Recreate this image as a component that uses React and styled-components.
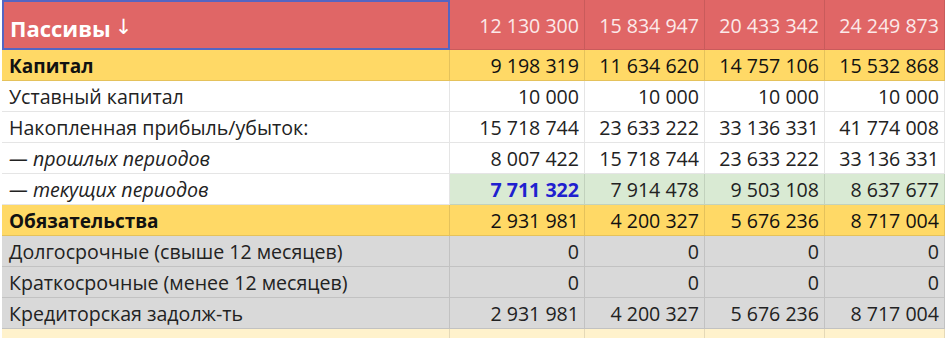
import React from "react";
import styled, { createGlobalStyle, css } from "styled-components";

const Global = createGlobalStyle`
  html, body { margin: 0; padding: 0; background: #ffffff; }
  body { font-family: "Open Sans", "Noto Sans", sans-serif; }
`;

const Sheet = styled.div`
  display: grid;
  grid-template-columns: 448px 135px 120px 120px 120px;
  width: 945px;
  padding-left: 2px;
  box-sizing: border-box;
  background: #ffffff;
`;

const tones = {
  header: { bg: "#e06666", color: "#fce9e9" },
  section: { bg: "#ffd966", color: "#111111" },
  plain: { bg: "#ffffff", color: "#222222" },
  green: { bg: "#d9ead3", color: "#222222" },
  gray: { bg: "#d9d9d9", color: "#222222" },
  tail: { bg: "#fff2cc", color: "#222222" },
};

const Cell = styled.div`
  box-sizing: border-box;
  height: ${(p) => (p.$tall ? 50 : 31)}px;
  display: flex;
  align-items: center;
  justify-content: ${(p) => (p.$num ? "flex-end" : "flex-start")};
  padding: ${(p) => (p.$num ? "2px 5px 0 2px" : "2px 7px 0")};
  font-size: ${(p) => (p.$bold && !p.$num ? 19 : 19.6)}px;
  line-height: 1;
  white-space: nowrap;
  background: ${(p) => tones[p.$tone].bg};
  color: ${(p) => tones[p.$tone].color};
  border-right: 1px solid rgba(0, 0, 0, 0.1);
  border-bottom: 1px solid rgba(0, 0, 0, 0.1);
  font-weight: ${(p) => (p.$bold ? 700 : 400)};
  font-style: ${(p) => (p.$italic ? "italic" : "normal")};
  ${(p) =>
    p.$selected &&
    css`
      border: 2px solid #5565c2;
      padding: 5px 0 0 6px;
      color: #ffffff;
      font-size: 22px;
    `}
  ${(p) =>
    p.$accent &&
    css`
      color: #1f21cf;
      font-weight: 700;
    `}
  ${(p) =>
    p.$tone === "tail" &&
    css`
      height: 9px;
      border-bottom: none;
    `}
`;

const Arrow = styled.span`
  font-weight: 400;
  margin-left: 4px;
  font-family: "DejaVu Sans", sans-serif;
  font-size: 21px;
`;

const rows = [
  { label: "Капитал", tone: "section", bold: true, vals: ["9 198 319", "11 634 620", "14 757 106", "15 532 868"] },
  { label: "Уставный капитал", tone: "plain", vals: ["10 000", "10 000", "10 000", "10 000"] },
  { label: "Накопленная прибыль/убыток:", tone: "plain", vals: ["15 718 744", "23 633 222", "33 136 331", "41 774 008"] },
  { label: "— прошлых периодов", tone: "plain", italic: true, vals: ["8 007 422", "15 718 744", "23 633 222", "33 136 331"] },
  { label: "— текущих периодов", tone: "plain", italic: true, valTone: "green", accentFirst: true, vals: ["7 711 322", "7 914 478", "9 503 108", "8 637 677"] },
  { label: "Обязательства", tone: "section", bold: true, vals: ["2 931 981", "4 200 327", "5 676 236", "8 717 004"] },
  { label: "Долгосрочные (свыше 12 месяцев)", tone: "gray", vals: ["0", "0", "0", "0"] },
  { label: "Краткосрочные (менее 12 месяцев)", tone: "gray", vals: ["0", "0", "0", "0"] },
  { label: "Кредиторская задолж-ть", tone: "gray", vals: ["2 931 981", "4 200 327", "5 676 236", "8 717 004"] },
];

export default function App() {
  const header = ["12 130 300", "15 834 947", "20 433 342", "24 249 873"];
  return (
    <>
      <Global />
      <Sheet>
        <Cell $tone="header" $tall $bold $selected>
          Пассивы<Arrow>↓</Arrow>
        </Cell>
        {header.map((v, i) => (
          <Cell key={i} $tone="header" $tall $num>
            {v}
          </Cell>
        ))}
        {rows.map((r, ri) => (
          <React.Fragment key={ri}>
            <Cell $tone={r.tone} $bold={r.bold} $italic={r.italic}>
              {r.label}
            </Cell>
            {r.vals.map((v, i) => (
              <Cell
                key={i}
                $tone={r.valTone || r.tone}
                $num
                $accent={r.accentFirst && i === 0}
              >
                {v}
              </Cell>
            ))}
          </React.Fragment>
        ))}
        {[0, 1, 2, 3, 4].map((i) => (
          <Cell key={"t" + i} $tone="tail" />
        ))}
      </Sheet>
    </>
  );
}
